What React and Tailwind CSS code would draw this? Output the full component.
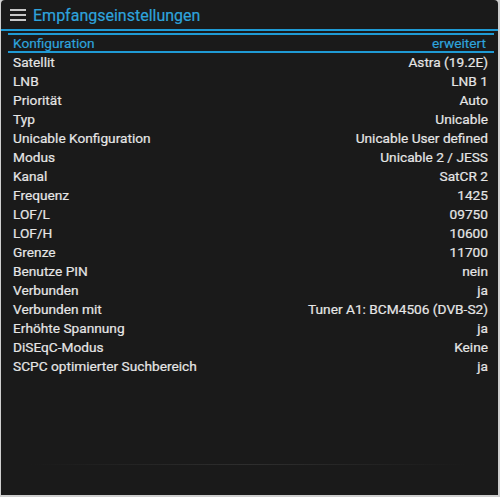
const rows = [
  ['Satellit', 'Astra (19.2E)'],
  ['LNB', 'LNB 1'],
  ['Priorität', 'Auto'],
  ['Typ', 'Unicable'],
  ['Unicable Konfiguration', 'Unicable User defined'],
  ['Modus', 'Unicable 2 / JESS'],
  ['Kanal', 'SatCR 2'],
  ['Frequenz', '1425'],
  ['LOF/L', '09750'],
  ['LOF/H', '10600'],
  ['Grenze', '11700'],
  ['Benutze PIN', 'nein'],
  ['Verbunden', 'ja'],
  ['Verbunden mit', 'Tuner A1: BCM4506 (DVB-S2)'],
  ['Erhöhte Spannung', 'ja'],
  ['DiSEqC-Modus', 'Keine'],
  ['SCPC optimierter Suchbereich', 'ja'],
]

const App = () => {
  return (
    <div className="w-[500px] h-[497px] bg-[#cfcfcf] pl-px pr-[2px] pb-[2px] font-['Roboto',sans-serif]">
      <div className="h-full bg-[#1a1a1a] rounded-t-[4px] flex flex-col relative">
        <div className="h-[31px] flex items-center gap-[7px] px-[9px] border-b-2 border-[#1f9ad4]">
          <svg width="16" height="12" viewBox="0 0 16 12" className="mt-[1px]">
            <rect x="0" y="0" width="16" height="2" fill="#c8c8c8" />
            <rect x="0" y="5" width="16" height="2" fill="#c8c8c8" />
            <rect x="0" y="10" width="16" height="2" fill="#c8c8c8" />
          </svg>
          <span className="text-[16px] text-[#2ea3dc] leading-none mt-[2px] [-webkit-text-stroke:0.2px_#2ea3dc]">Empfangseinstellungen</span>
        </div>
        <div className="ml-[7px] mr-[4px] mt-[2px] border-t-2 border-b-2 border-[#1f9ad4] h-[20px] flex items-center justify-between pl-[5px] pr-[8px] text-[13.7px] text-[#2ea3dc] [-webkit-text-stroke:0.2px_#2ea3dc]">
          <span className="mt-[1px]">Konfiguration</span>
          <span className="mt-[1px]">erweitert</span>
        </div>
        <div className="pl-[12px] pr-[10px] flex flex-col">
          {rows.map(([label, value]) => (
            <div key={label} className="h-[19px] flex items-center justify-between text-[13.7px] text-[#e6e6e6] [-webkit-text-stroke:0.2px_#e6e6e6]">
              <span>{label}</span>
              <span>{value}</span>
            </div>
          ))}
        </div>
        <div className="absolute left-[30px] right-[30px] top-[464px] h-px bg-gradient-to-r from-transparent via-[#2e2e2e] to-transparent" />
      </div>
    </div>
  )
}

export default App
